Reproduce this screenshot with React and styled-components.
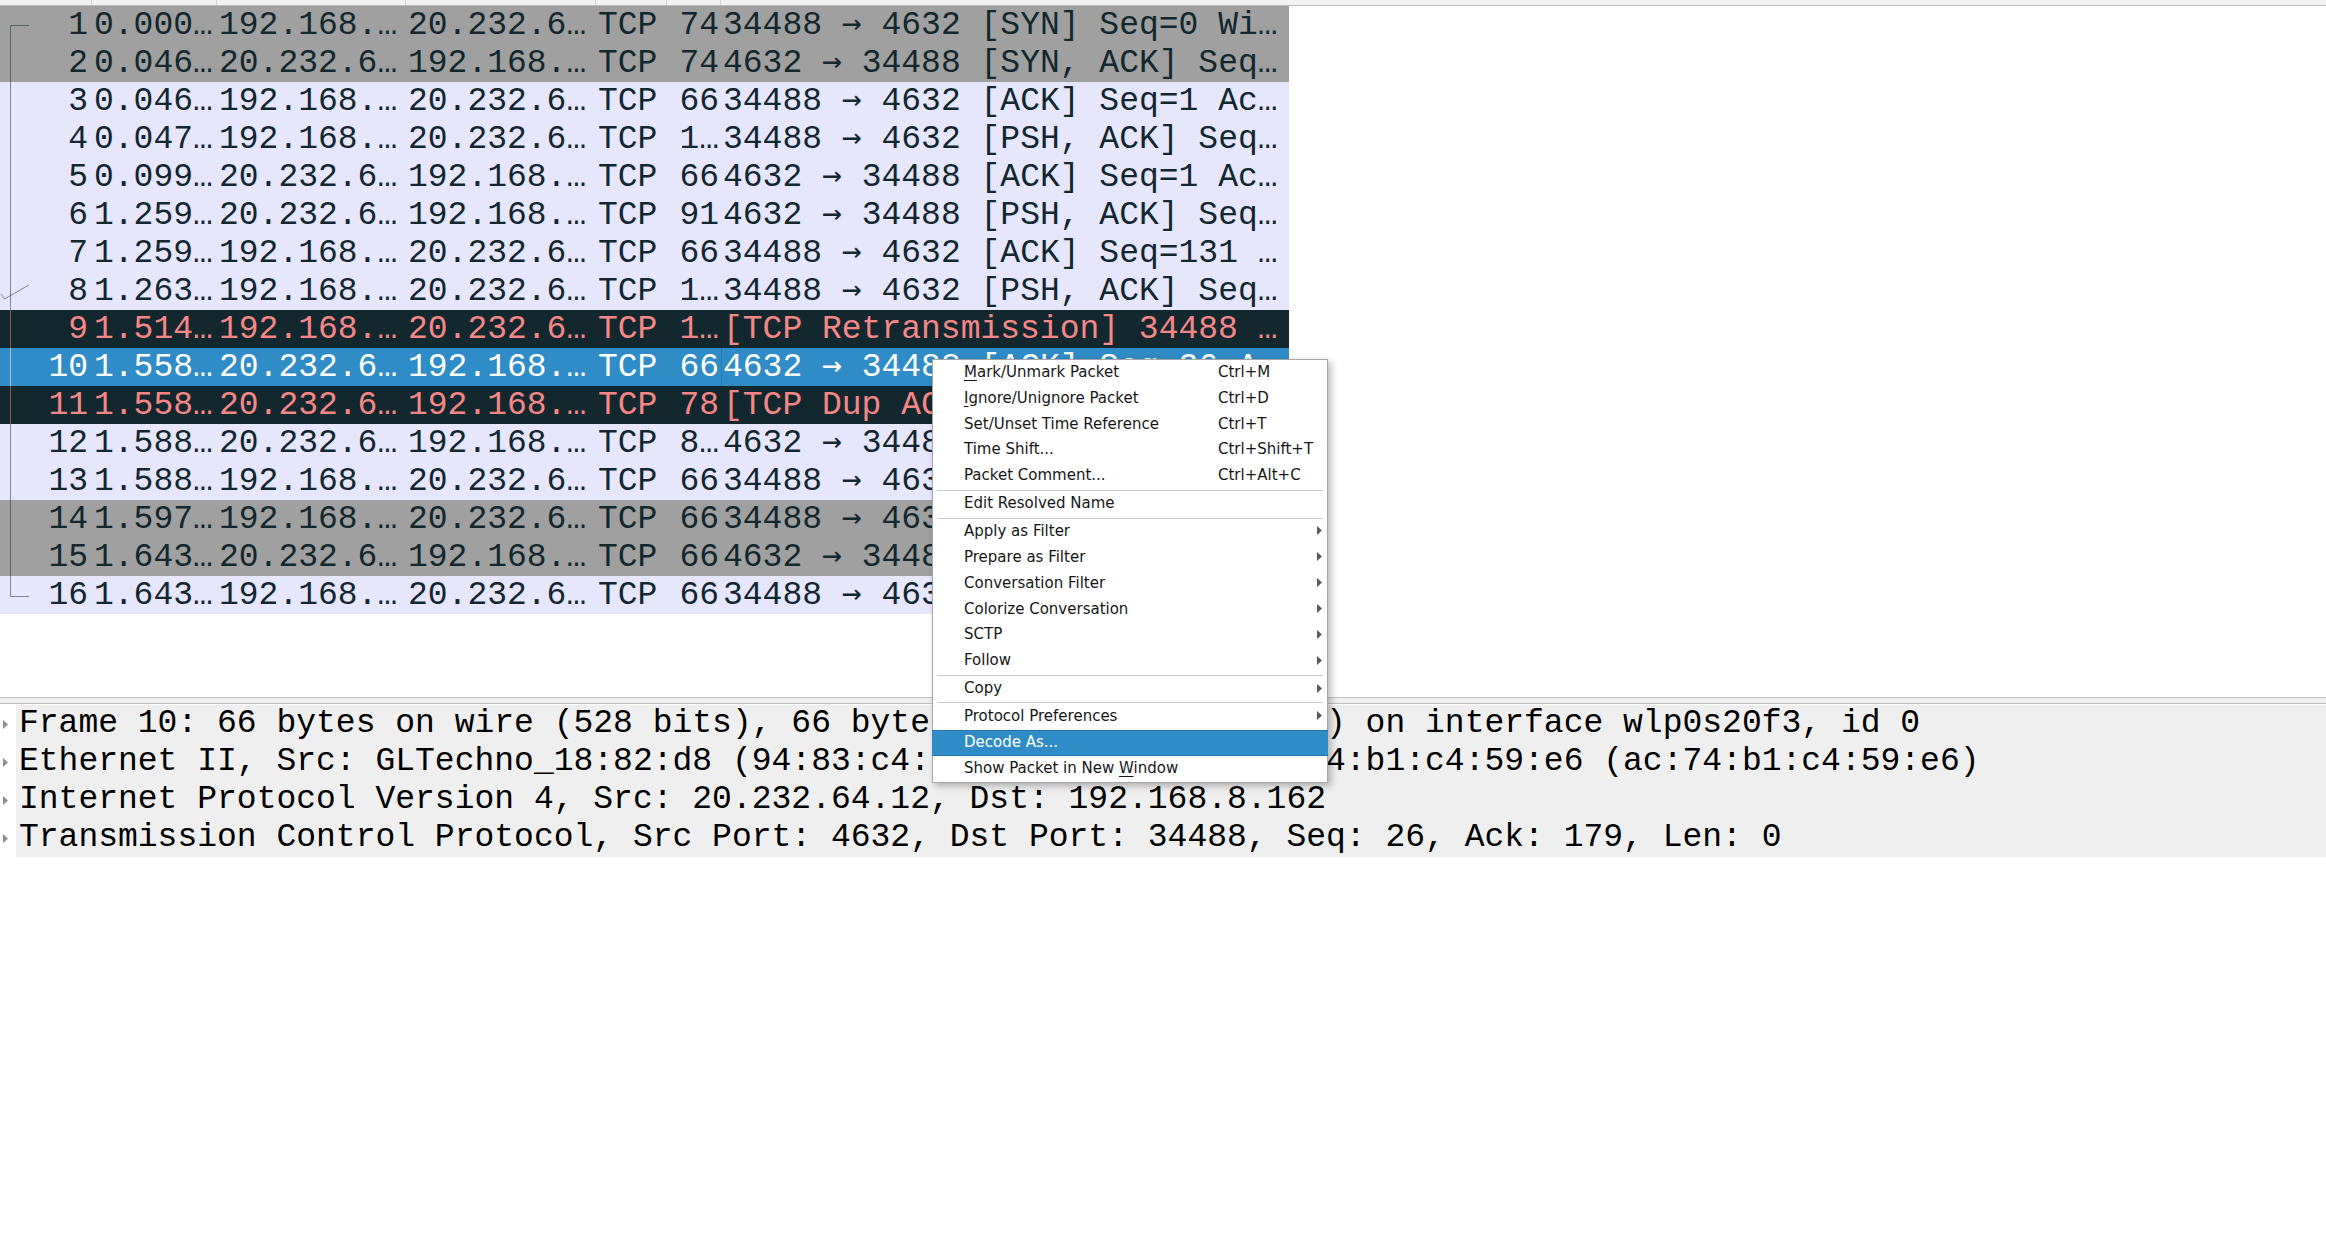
import React from "react";
import styled, { createGlobalStyle, css } from "styled-components";

const COLS = "92px 125px 189px 190px 71px 54px 568px";

const ROW_KINDS = {
  syn: { bg: "#a0a0a0", fg: "#12272e" },
  tcp: { bg: "#e7e6ff", fg: "#12272e" },
  bad: { bg: "#12272e", fg: "#f78787" },
  sel: { bg: "#308cc6", fg: "#ffffff" },
};

const packets = [
  ["1", "0.000…", "192.168.…", "20.232.6…", "TCP", "74", "34488 → 4632 [SYN] Seq=0 Wi…", "syn", "start"],
  ["2", "0.046…", "20.232.6…", "192.168.…", "TCP", "74", "4632 → 34488 [SYN, ACK] Seq…", "syn", "mid"],
  ["3", "0.046…", "192.168.…", "20.232.6…", "TCP", "66", "34488 → 4632 [ACK] Seq=1 Ac…", "tcp", "mid"],
  ["4", "0.047…", "192.168.…", "20.232.6…", "TCP", "1…", "34488 → 4632 [PSH, ACK] Seq…", "tcp", "mid"],
  ["5", "0.099…", "20.232.6…", "192.168.…", "TCP", "66", "4632 → 34488 [ACK] Seq=1 Ac…", "tcp", "mid"],
  ["6", "1.259…", "20.232.6…", "192.168.…", "TCP", "91", "4632 → 34488 [PSH, ACK] Seq…", "tcp", "mid"],
  ["7", "1.259…", "192.168.…", "20.232.6…", "TCP", "66", "34488 → 4632 [ACK] Seq=131 …", "tcp", "mid"],
  ["8", "1.263…", "192.168.…", "20.232.6…", "TCP", "1…", "34488 → 4632 [PSH, ACK] Seq…", "tcp", "ack"],
  ["9", "1.514…", "192.168.…", "20.232.6…", "TCP", "1…", "[TCP Retransmission] 34488 …", "bad", "mid"],
  ["10", "1.558…", "20.232.6…", "192.168.…", "TCP", "66", "4632 → 34488 [ACK] Seq=26 A…", "sel", "mid"],
  ["11", "1.558…", "20.232.6…", "192.168.…", "TCP", "78", "[TCP Dup ACK 10#1] 4632 → …", "bad", "mid"],
  ["12", "1.588…", "20.232.6…", "192.168.…", "TCP", "8…", "4632 → 34488 [PSH, ACK] Seq…", "tcp", "mid"],
  ["13", "1.588…", "192.168.…", "20.232.6…", "TCP", "66", "34488 → 4632 [ACK] Seq=179…", "tcp", "mid"],
  ["14", "1.597…", "192.168.…", "20.232.6…", "TCP", "66", "34488 → 4632 [FIN, ACK] Se…", "syn", "mid"],
  ["15", "1.643…", "20.232.6…", "192.168.…", "TCP", "66", "4632 → 34488 [FIN, ACK] Se…", "syn", "mid"],
  ["16", "1.643…", "192.168.…", "20.232.6…", "TCP", "66", "34488 → 4632 [ACK] Seq=180…", "tcp", "end"],
];

const details = [
  "Frame 10: 66 bytes on wire (528 bits), 66 bytes captured (528 bits) on interface wlp0s20f3, id 0",
  "Ethernet II, Src: GLTechno_18:82:d8 (94:83:c4:18:82:d8), Dst: ac:74:b1:c4:59:e6 (ac:74:b1:c4:59:e6)",
  "Internet Protocol Version 4, Src: 20.232.64.12, Dst: 192.168.8.162",
  "Transmission Control Protocol, Src Port: 4632, Dst Port: 34488, Seq: 26, Ack: 179, Len: 0",
];

const menu = [
  { label: "Mark/Unmark Packet", key: "M", shortcut: "Ctrl+M" },
  { label: "Ignore/Unignore Packet", key: "I", shortcut: "Ctrl+D" },
  { label: "Set/Unset Time Reference", shortcut: "Ctrl+T" },
  { label: "Time Shift...", shortcut: "Ctrl+Shift+T" },
  { label: "Packet Comment...", shortcut: "Ctrl+Alt+C" },
  "sep",
  { label: "Edit Resolved Name" },
  "sep",
  { label: "Apply as Filter", sub: true },
  { label: "Prepare as Filter", sub: true },
  { label: "Conversation Filter", sub: true },
  { label: "Colorize Conversation", sub: true },
  { label: "SCTP", sub: true },
  { label: "Follow", sub: true },
  "sep",
  { label: "Copy", sub: true },
  "sep",
  { label: "Protocol Preferences", sub: true },
  { label: "Decode As...", active: true },
  { label: "Show Packet in New Window", key: "W" },
];

const GlobalStyle = createGlobalStyle`
  html, body {
    margin: 0;
    padding: 0;
    background: #ffffff;
  }
  body {
    overflow: hidden;
  }
`;

const Window = styled.div`
  position: relative;
  width: 2326px;
  height: 1252px;
  display: flex;
  flex-direction: column;
  background: #ffffff;
  overflow: hidden;
`;

const PacketList = styled.div`
  height: 697px;
  flex-shrink: 0;
  display: flex;
  flex-direction: column;
  background: #ffffff;
`;

const HeaderStrip = styled.div`
  display: grid;
  grid-template-columns: ${COLS} 1fr;
  height: 5px;
  background: #f2f2f2;
  border-bottom: 1px solid #bcbcbc;
`;

const HeaderCell = styled.div`
  border-right: 1px solid #d4d4d4;
`;

const Row = styled.div`
  display: grid;
  grid-template-columns: ${COLS};
  width: 1289px;
  height: 38px;
  line-height: 36px;
  font-family: "Liberation Mono", "DejaVu Sans Mono", monospace;
  font-size: 33px;
  background: ${(p) => ROW_KINDS[p.$kind].bg};
  color: ${(p) => ROW_KINDS[p.$kind].fg};
`;

const Cell = styled.div`
  padding-top: 2px;
  padding-left: 2px;
  white-space: pre;
  overflow: hidden;
  text-align: ${(p) => (p.$right ? "right" : "left")};
  padding-right: ${(p) => (p.$right ? "2px" : "0")};
  box-shadow: ${(p) => (p.$focus ? "inset 1px 0 0 rgba(0, 0, 0, 0.12)" : "none")};
`;

const NumCell = styled(Cell)`
  position: relative;
  padding-right: 4px;
`;

const Arrow = styled.span`
  font-family: "DejaVu Sans Mono", monospace;
  line-height: 0;
`;

const TreeMark = styled.svg`
  position: absolute;
  left: 0;
  top: 0;
`;

const Splitter = styled.div`
  height: 5px;
  flex-shrink: 0;
  background: #efefef;
  border-top: 1px solid #c2c2c2;
  border-bottom: 1px solid #c2c2c2;
`;

const DetailPane = styled.div`
  flex: 1;
  display: flex;
  flex-direction: column;
  padding-top: 1px;
  background: #ffffff;
`;

const DetailRow = styled.div`
  display: flex;
  height: 38px;
`;

const Expander = styled.div`
  width: 16px;
  display: flex;
  align-items: center;
  padding-left: 3px;
  box-sizing: border-box;
`;

const DetailText = styled.div`
  flex: 1;
  background: #efefef;
  padding-left: 3px;
  line-height: 38px;
  font-family: "Liberation Mono", "DejaVu Sans Mono", monospace;
  font-size: 33px;
  color: #000000;
  white-space: pre;
  overflow: hidden;
`;

const Menu = styled.div`
  position: absolute;
  left: 932px;
  top: 359px;
  width: 394px;
  background: #ffffff;
  border: 1px solid #a6a6a6;
  box-shadow: 3px 3px 7px rgba(0, 0, 0, 0.28);
  font-family: "DejaVu Sans", "Noto Sans", sans-serif;
  font-size: 15px;
  color: #161616;
`;

const MenuItem = styled.div`
  display: grid;
  grid-template-columns: 31px 254px 1fr 14px;
  align-items: center;
  height: 25.85px;
  padding-bottom: 2px;
  box-sizing: border-box;
  white-space: nowrap;
  ${(p) =>
    p.$active &&
    css`
      margin: 0 -1px;
      padding: 0 1px 2px;
      background: #308cc6;
      color: #ffffff;
      border-top: 1px solid #2676ab;
      border-bottom: 1px solid #2676ab;
    `}
`;

const Shortcut = styled.span`
  grid-column: 3;
`;

const SubArrow = styled.svg`
  grid-column: 4;
  margin-left: 4px;
`;

const Mnemonic = styled.span`
  text-decoration: underline;
  text-underline-offset: 3px;
`;

const Separator = styled.div`
  height: 1px;
  margin: 0.5px 4px;
  background: #c9c9c9;
`;

const Tree = ({ type, color }) => (
  <TreeMark width="30" height="38" viewBox="0 0 30 38">
    <g stroke={color} strokeOpacity="0.5" strokeWidth="1" fill="none">
      {type === "start" && <path d="M10.5 19.5 H29 M10.5 19.5 V38" />}
      {type === "end" && <path d="M10.5 0 V20.5 H29" />}
      {(type === "mid" || type === "ack") && <path d="M10.5 0 V38" />}
      {type === "ack" && <polyline points="1,22 4.5,27 29,13" />}
    </g>
  </TreeMark>
);

const InfoText = ({ text }) =>
  text.split("→").map((part, i) => (
    <React.Fragment key={i}>
      {i > 0 && <Arrow>→</Arrow>}
      {part}
    </React.Fragment>
  ));

const Label = ({ label, mnemonic }) => {
  if (!mnemonic) return <span style={{ gridColumn: 2 }}>{label}</span>;
  const i = label.indexOf(mnemonic);
  return (
    <span style={{ gridColumn: 2 }}>
      {label.slice(0, i)}
      <Mnemonic>{label[i]}</Mnemonic>
      {label.slice(i + 1)}
    </span>
  );
};

const App = () => (
  <Window>
    <GlobalStyle />
    <PacketList>
      <HeaderStrip>
        {[0, 1, 2, 3, 4, 5].map((i) => (
          <HeaderCell key={i} />
        ))}
      </HeaderStrip>
      {packets.map(([no, time, src, dst, proto, len, info, kind, tree]) => (
        <Row key={no} $kind={kind}>
          <NumCell $right>
            <Tree type={tree} color={ROW_KINDS[kind].fg} />
            {no}
          </NumCell>
          <Cell>{time}</Cell>
          <Cell>{src}</Cell>
          <Cell>{dst}</Cell>
          <Cell>{proto}</Cell>
          <Cell $right>{len}</Cell>
          <Cell $focus={kind === "sel"}>
            <InfoText text={info} />
          </Cell>
        </Row>
      ))}
    </PacketList>
    <Splitter />
    <DetailPane>
      {details.map((text) => (
        <DetailRow key={text}>
          <Expander>
            <svg width="5" height="9" viewBox="0 0 5 9">
              <polygon points="0,0 5,4.5 0,9" fill="#8e8e8e" />
            </svg>
          </Expander>
          <DetailText>{text}</DetailText>
        </DetailRow>
      ))}
    </DetailPane>
    <Menu>
      {menu.map((item, i) =>
        item === "sep" ? (
          <Separator key={i} />
        ) : (
          <MenuItem key={i} $active={item.active}>
            <Label label={item.label} mnemonic={item.key} />
            {item.shortcut && <Shortcut>{item.shortcut}</Shortcut>}
            {item.sub && (
              <SubArrow width="5" height="9" viewBox="0 0 5 9">
                <polygon points="0,0 5,4.5 0,9" fill="#5a5a5a" />
              </SubArrow>
            )}
          </MenuItem>
        )
      )}
    </Menu>
  </Window>
);

export default App;
